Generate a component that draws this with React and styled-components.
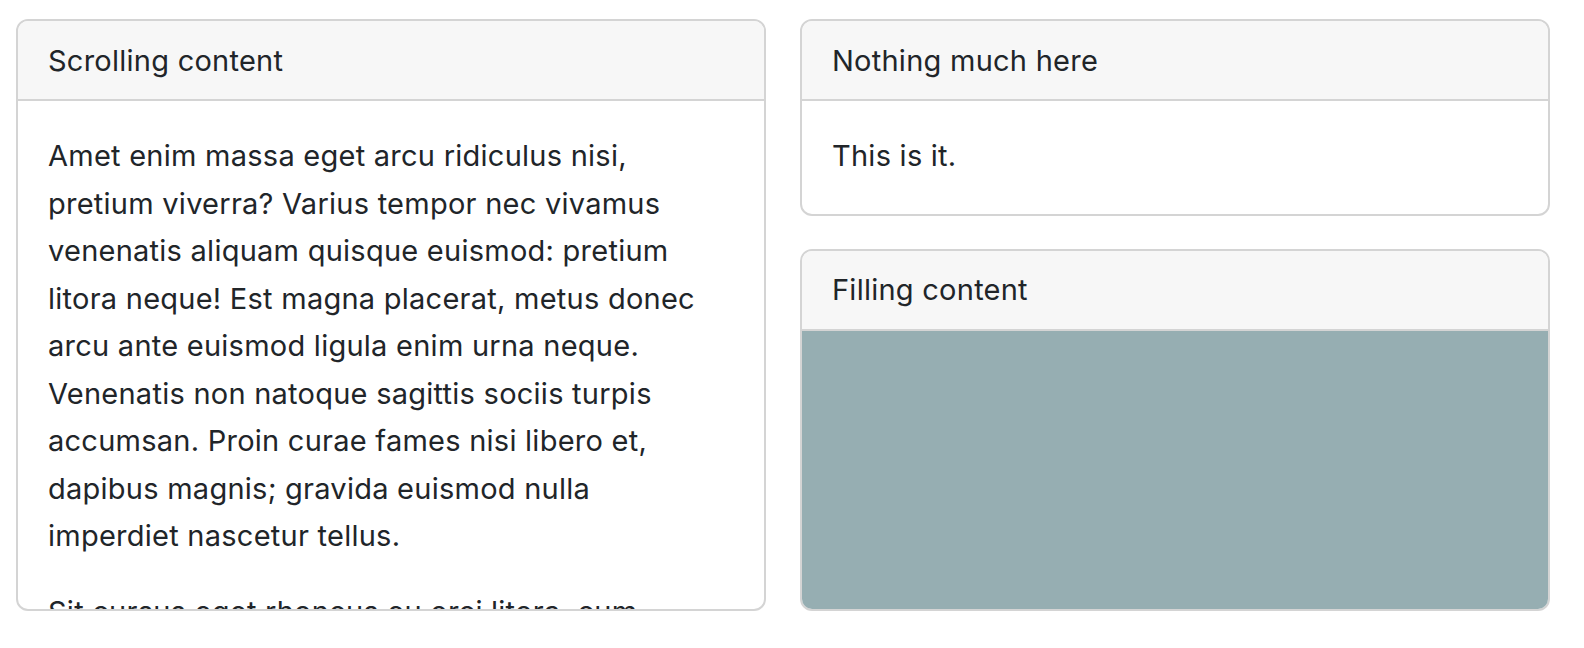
import React from "react";
import styled, { createGlobalStyle } from "styled-components";

const GlobalStyle = createGlobalStyle`
  html, body {
    margin: 0;
    padding: 0;
    background: #ffffff;
    overflow: hidden;
  }
  body {
    font-family: Inter, "Noto Sans", "Liberation Sans", sans-serif;
    color: #212529;
  }
  * { box-sizing: border-box; }
`;

const Page = styled.div`
  height: 648px;
  padding: 19px 34px 37px 16px;
  display: grid;
  grid-template-columns: minmax(0, 1fr) minmax(0, 1fr);
  grid-template-rows: minmax(0, 1fr);
  gap: 34px;
`;

const Column = styled.div`
  display: flex;
  flex-direction: column;
  gap: 33px;
  min-height: 0;
`;

const Card = styled.div`
  display: flex;
  flex-direction: column;
  border: 2px solid #d4d4d4;
  border-radius: 12px;
  overflow: hidden;
  min-height: 0;
  flex: ${(p) => (p.$grow ? "1" : "none")};
  background: #ffffff;
`;

const CardHeader = styled.div`
  flex: none;
  background: #f7f7f7;
  border-bottom: 2px solid #d4d4d4;
  padding: 0 30px;
  height: 80px;
  display: flex;
  align-items: center;
  font-size: 29px;
  letter-spacing: 0.25px;
`;

const CardBody = styled.div`
  padding: 31px 40px ${(p) => (p.$scroll ? "0" : "34px")} 30px;
  font-size: 29px;
  letter-spacing: 0.25px;
  line-height: 47.5px;
  flex: 1;
  min-height: 0;
  overflow: hidden;

  p {
    margin: 0 0 28px;
  }
  p:last-child {
    margin-bottom: 0;
  }
`;

const Filler = styled.div`
  flex: 1;
  background: #96aeb2;
`;

export default function App() {
  return (
    <>
      <GlobalStyle />
      <Page>
        <Card>
          <CardHeader>Scrolling content</CardHeader>
          <CardBody $scroll>
            <p>
              Amet enim massa eget arcu ridiculus nisi, pretium viverra? Varius
              tempor nec vivamus venenatis aliquam quisque euismod: pretium
              litora neque! Est magna placerat, metus donec arcu ante euismod
              ligula enim urna neque. Venenatis non natoque sagittis sociis
              turpis accumsan. Proin curae fames nisi libero et, dapibus magnis;
              gravida euismod nulla imperdiet nascetur tellus.
            </p>
            <p>
              Sit cursus eget rhoncus eu orci litora, cum mattis lacus. Magna
              nec proin sapien dictum montes. Vivamus lacinia at porta tempus;
              eget sollicitudin ullamcorper laoreet.
            </p>
          </CardBody>
        </Card>
        <Column>
          <Card>
            <CardHeader>Nothing much here</CardHeader>
            <CardBody>This is it.</CardBody>
          </Card>
          <Card $grow>
            <CardHeader>Filling content</CardHeader>
            <Filler />
          </Card>
        </Column>
      </Page>
    </>
  );
}
